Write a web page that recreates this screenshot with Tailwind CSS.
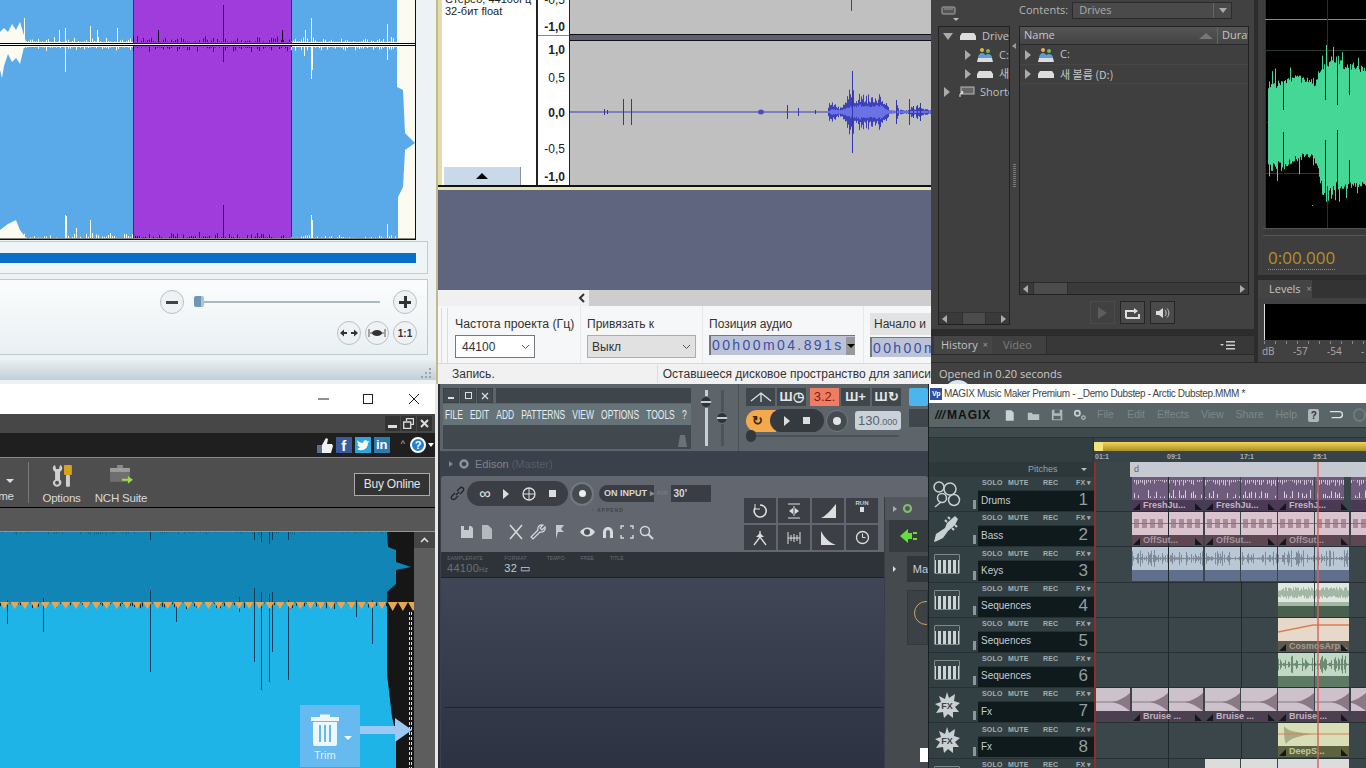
<!DOCTYPE html>
<html lang="en">
<head>
  <meta charset="UTF-8" />
  <title>Audio editors</title>
  <script src="https://cdn.jsdelivr.net/npm/@tailwindcss/browser@4"></script>
</head>
<body class="bg-black">
<div class="w-[1366px] h-[768px] overflow-hidden flex flex-col font-['Liberation_Sans',sans-serif]">

  <!-- top row -->
  <div class="flex h-[384px]">

    <!-- waveform editor, light -->
    <section class="w-[438px] h-full shrink-0 bg-[#edf2f5] border-r-2 border-[#c4b88e] flex flex-col overflow-hidden">
      <svg id="w1" width="416" height="240" class="block shrink-0"></svg>
      <div class="w-[428px] h-[33px] mt-[1px] border border-l-0 border-[#c3cacd] bg-[#eff4f6] flex items-center">
        <div class="w-[416px] h-[10px] bg-[#0a6fc7]"></div>
      </div>
      <div class="w-[428px] h-[76px] mt-[5px] border border-l-0 border-[#c3cacd] bg-gradient-to-b from-[#fbfdfd] to-[#e9f0f3] pr-[10px] pt-[10px] flex flex-col items-end gap-[7px]">
        <div class="flex items-center">
          <div class="w-[24px] h-[24px] rounded-full border border-[#b9c0c4] bg-[#eef2f4] flex items-center justify-center"><div class="w-[12px] h-[3px] bg-[#444]"></div></div>
          <div class="w-[186px] h-[2px] bg-[#a9b9bf] ml-[10px] mr-[13px] relative"><div class="absolute left-0 top-[-5px] w-[10px] h-[11px] rounded-[2px] bg-[#6f97b5] border-r-3 border-[#a8c3d6]"></div></div>
          <div class="w-[24px] h-[24px] rounded-full border border-[#b9c0c4] bg-[#eef2f4] flex items-center justify-center relative"><div class="w-[12px] h-[3px] bg-[#333]"></div><div class="absolute w-[3px] h-[12px] bg-[#333]"></div></div>
        </div>
        <div class="flex gap-[4px]">
          <div class="w-[24px] h-[24px] rounded-full border border-[#b9c0c4] bg-[#eef2f4] flex items-center justify-center">
            <svg width="18" height="8" viewBox="0 0 18 8"><path d="M0 4l4-3.500v2.500h3v2H4v2.500zM18 4l-4-3.500v2.500h-3v2h3v2.500z" fill="#333"/></svg>
          </div>
          <div class="w-[24px] h-[24px] rounded-full border border-[#b9c0c4] bg-[#eef2f4] flex items-center justify-center">
            <svg width="18" height="10" viewBox="0 0 18 10"><path d="M1 1v8M17 1v8M2 5h14" stroke="#555" fill="none"/><ellipse cx="9" cy="5" rx="5" ry="3" fill="#333"/></svg>
          </div>
          <div class="w-[24px] h-[24px] rounded-full border border-[#b9c0c4] bg-[#eef2f4] flex items-center justify-center text-[10px] font-bold text-[#333]">1:1</div>
        </div>
      </div>
      <div class="w-[436px] h-[20px] mt-[5px] bg-gradient-to-b from-[#e9eff2] to-[#c2ced5] flex justify-end items-end pr-[4px] pb-[1px]">
        <svg width="12" height="12" viewBox="0 0 12 12" fill="#9aa5ab"><rect x="9" y="1" width="2" height="2"/><rect x="5" y="5" width="2" height="2"/><rect x="9" y="5" width="2" height="2"/><rect x="1" y="9" width="2" height="2"/><rect x="5" y="9" width="2" height="2"/><rect x="9" y="9" width="2" height="2"/></svg>
      </div>
    </section>

    <!-- audacity -->
    <section class="w-[493px] h-full shrink-0 bg-[#5f647f] flex flex-col overflow-hidden">
      <div class="h-[185px] flex bg-white">
        <div class="w-[4px] bg-[#e3ddad]"></div>
        <div class="w-[97px] border-r-2 border-[#222] flex flex-col text-[11px] leading-[12px] text-[#222] pl-[3px]">
          <div class="-mt-[7px] h-[12px] whitespace-nowrap">Стерео, 44100Гц</div>
          <div>32-бит float</div>
          <div class="mt-auto w-[77px] h-[18px] -ml-[1px] bg-[#c9d9ea] border-r border-[#8d96a0] flex items-center justify-center">
            <div class="w-0 h-0 border-l-[6px] border-r-[6px] border-b-[6px] border-l-transparent border-r-transparent border-b-black"></div>
          </div>
        </div>
        <div class="w-[31px] text-[12px] text-[#222] text-right pr-[4px] flex flex-col">
          <div class="h-[36px] border-b border-[#888] -mr-[4px] pr-[4px] shrink-0">
            <div class="h-[14px] leading-[14px] -mt-[7px]">-0,5</div>
            <div class="h-[14px] leading-[14px] mt-[13px] font-bold">-1,0</div>
          </div>
          <div class="h-[14px] leading-[14px] mt-[7px] font-bold">1,0</div>
          <div class="h-[14px] leading-[14px] mt-[14px]">0,5</div>
          <div class="h-[14px] leading-[14px] mt-[21px] font-bold">0,0</div>
          <div class="h-[14px] leading-[14px] mt-[22px]">-0,5</div>
          <div class="h-[14px] leading-[14px] mt-[14px] font-bold">-1,0</div>
        </div>
        <div class="flex-1 flex flex-col border-l border-[#222]">
          <div class="h-[35px] bg-[#c0c0c0] border-b border-[#111] flex">
            <div class="ml-[281px] w-[1px] h-[11px] bg-[#3d40a8]"></div>
          </div>
          <div class="h-[6px] bg-[#5f6076] border-b border-[#111]"></div>
          <svg id="w2" width="361" height="144" class="block bg-[#c0c0c0]"></svg>
        </div>
      </div>
      <div class="h-[2px] bg-[#111]"></div>
      <div class="h-[3px] bg-[#e6e3b0]"></div>
      <div class="h-[100px] bg-[#5f647f]"></div>
      <div class="h-[16px] flex bg-[#cdcdcd]">
        <div class="w-[151px] bg-[#f0f0f0] flex items-center justify-end pr-[3px]"><svg width="8" height="10" viewBox="0 0 8 10"><path d="M6 1L2 5l4 4" stroke="#333" stroke-width="2" fill="none"/></svg></div>
      </div>
      <div class="h-[58px] bg-[#f6f7f8] border-b border-[#d8d8d8] text-[12px] text-[#333] flex pl-[3px]">
        <div class="w-[7px] border-l border-r border-[#dcdcdc] mr-[6px] mt-[2px]"></div>
        <div class="w-[127px] pt-[10px] pl-[1px] border-r border-[#e8e8e8]">
          <div class="leading-[16px] whitespace-nowrap text-[12.300px]">Частота проекта (Гц)</div>
          <div class="mt-[3px] w-[80px] h-[23px] bg-white border border-[#777] flex items-center justify-between pl-[6px] pr-[4px]"><span>44100</span><svg width="9" height="6" viewBox="0 0 9 6"><path d="M1 1l3.500 3.500L8 1" stroke="#555" fill="none"/></svg></div>
        </div>
        <div class="w-[122px] pt-[10px] pl-[6px] border-r border-[#e8e8e8]">
          <div class="leading-[16px]">Привязать к</div>
          <div class="mt-[3px] w-[109px] h-[23px] bg-[#e1e1e1] border border-[#adadad] flex items-center justify-between pl-[4px] pr-[4px]"><span>Выкл</span><svg width="9" height="6" viewBox="0 0 9 6"><path d="M1 1l3.500 3.500L8 1" stroke="#555" fill="none"/></svg></div>
        </div>
        <div class="w-[161px] pt-[10px] pl-[6px] border-r border-[#e8e8e8]">
          <div class="leading-[16px]">Позиция аудио</div>
          <div class="mt-[3px] w-[146px] h-[20px] bg-[#bcc3d6] border-l-2 border-t border-[#777] flex items-center justify-between pl-[1px] text-[14px] tracking-[2.400px] text-[#3a4fa5] whitespace-nowrap overflow-hidden"><span>00h00m04.891s</span><div class="w-[9px] h-[18px] bg-[#999] flex items-center justify-center shrink-0"><div class="w-0 h-0 border-l-[4px] border-r-[4px] border-t-[4px] border-l-transparent border-r-transparent border-t-black"></div></div></div>
        </div>
        <div class="pl-[6px] pt-[7px] flex-1 overflow-hidden">
          <div class="w-[80px] h-[22px] bg-[#e3e3e3] leading-[22px] pl-[4px] whitespace-nowrap">Начало и</div>
          <div class="mt-[2px] w-[100px] h-[20px] bg-[#bcc3d6] border-l-2 border-t border-[#777] pl-[1px] text-[14px] tracking-[2.400px] text-[#3a4fa5] whitespace-nowrap">00h00m</div>
        </div>
      </div>
      <div class="flex-1 bg-[#f1f1f1] text-[12px] text-[#333] flex items-center pl-[14px]">
        <div class="w-[213px]">Запись.</div><div class="whitespace-nowrap border-l border-[#ddd] pl-[5px]">Оставшееся дисковое пространство для записи</div>
      </div>
    </section>

    <!-- audition -->
    <section class="flex-1 min-w-0 h-full bg-[#2c2c2c] flex flex-col font-['Open_Sans',sans-serif] text-[#bdbdbd] overflow-hidden">
      <div class="h-[362px] flex">
        <div class="w-[323px] shrink-0 flex flex-col">
          <div class="h-[329px] bg-[#414141] flex flex-col">
            <div class="h-[26px] flex items-start pt-[2px] relative">
              <svg class="ml-[10px] mt-[2px]" width="18" height="18" viewBox="0 0 18 18"><rect x="1" y="3" width="13" height="7" rx="1" fill="#555" stroke="#aaa"/><path d="M3 5h9" stroke="#999"/><path d="M12 14h6l-3 3z" fill="#bbb"/></svg>
              <span class="ml-[60px] text-[11px] text-[#b5b5b5] leading-[16px]">Contents:</span>
              <div class="ml-[4px] w-[160px] h-[17px] bg-[#4a4a4a] border border-[#2b2b2b] flex justify-between items-center pl-[6px] text-[11px] text-[#aaa]"><span>Drives</span><div class="w-[18px] h-full border-l border-[#666] flex items-center justify-center"><div class="w-0 h-0 border-l-[4px] border-r-[4px] border-t-[5px] border-l-transparent border-r-transparent border-t-[#aaa]"></div></div></div>
            </div>
            <div class="flex flex-1 pl-[7px]">
              <!-- tree -->
              <div class="w-[72px] h-[299px] border border-[#222] bg-[#3f3f3f] flex flex-col text-[11px] text-[#c0c0c0]">
                <div class="flex-1 overflow-hidden whitespace-nowrap">
                  <div class="h-[18.700px] flex items-center pl-[4px]"><div class="shrink-0 w-0 h-0 border-l-[5px] border-r-[5px] border-t-[7px] border-l-transparent border-r-transparent border-t-[#aaa]"></div><svg class="shrink-0 ml-[7px] mr-[6px]" width="16" height="10" viewBox="0 0 16 10"><path d="M2 2h12l2 3v4H0V5z" fill="#ddd"/></svg><span>Drives</span></div>
                  <div class="h-[18.700px] flex items-center pl-[26px]"><div class="shrink-0 w-0 h-0 border-t-[5px] border-b-[5px] border-l-[6px] border-t-transparent border-b-transparent border-l-[#aaa]"></div><svg class="shrink-0 ml-[6px] mr-[6px]" width="16" height="16" viewBox="0 0 16 16"><circle cx="5" cy="3" r="2" fill="#e0b84a"/><circle cx="11" cy="4" r="2" fill="#7bb85a"/><path d="M1 11c0-3 2-5 4-5s4 2 4 5zM7 11c0-3 2-4 4-4s4 1 4 4z" fill="#5f9ccf"/><path d="M1 11h14l1 4H0z" fill="#dcdcdc"/></svg><span>C:</span></div>
                  <div class="h-[18.700px] flex items-center pl-[26px]"><div class="shrink-0 w-0 h-0 border-t-[5px] border-b-[5px] border-l-[6px] border-t-transparent border-b-transparent border-l-[#aaa]"></div><svg class="shrink-0 ml-[6px] mr-[6px]" width="16" height="10" viewBox="0 0 16 10"><path d="M2 2h12l2 3v4H0V5z" fill="#ddd"/></svg><span class="font-['Noto_Sans_CJK_KR',sans-serif]">새 볼륨</span></div>
                  <div class="h-[18.700px] flex items-center pl-[5px]"><div class="shrink-0 w-0 h-0 border-t-[5px] border-b-[5px] border-l-[6px] border-t-transparent border-b-transparent border-l-[#aaa]"></div><svg class="shrink-0 ml-[9px] mr-[5px]" width="16" height="12" viewBox="0 0 16 12"><rect x="2" y="1" width="13" height="7" fill="#666" stroke="#bbb"/><path d="M1 11V8l3-2M2 5l2 1-1 2" stroke="#eee" fill="none"/></svg><span>Shortcuts</span></div>
                </div>
                <div class="h-[12px] flex items-center justify-between bg-[#3a3a3a] border-t border-[#333] px-[3px]"><div class="w-0 h-0 border-t-[4px] border-b-[4px] border-r-[5px] border-t-transparent border-b-transparent border-r-[#aaa]"></div><div class="w-[24px] h-full bg-[#4c4c4c] border-x border-[#2e2e2e]"></div><div class="w-0 h-0 border-t-[4px] border-b-[4px] border-l-[5px] border-t-transparent border-b-transparent border-l-[#aaa]"></div></div>
              </div>
              <!-- splitter -->
              <div class="w-[9px] relative"><div class="absolute left-[3px] top-[138px] w-[3px] h-[23px] bg-[repeating-linear-gradient(#7a7a7a_0_1px,transparent_1px_2px)]"></div><div class="absolute left-[2px] top-[17px] w-0 h-0 border-t-[3px] border-b-[3px] border-r-[4px] border-t-transparent border-b-transparent border-r-[#999]"></div></div>
              <!-- list -->
              <div class="w-[230px] flex flex-col">
                <div class="h-[269px] border border-[#222] bg-[#3f3f3f] flex flex-col">
                  <div class="h-[18px] bg-gradient-to-b from-[#555] to-[#444] border-b border-[#2a2a2a] flex items-center text-[11px] pl-[4px] text-[#c5c5c5]"><span>Name</span><div class="ml-auto mr-[4px] w-0 h-0 border-l-[7px] border-r-[7px] border-b-[6px] border-l-transparent border-r-transparent border-b-[#777]"></div><div class="w-[31px] border-l border-[#666] pl-[4px] overflow-hidden">Duration</div></div>
                  <div class="h-[20px] flex items-center border-b border-[#464646] pl-[5px] text-[11px] text-[#c5c5c5]"><div class="w-0 h-0 border-t-[5px] border-b-[5px] border-l-[6px] border-t-transparent border-b-transparent border-l-[#aaa]"></div><svg class="ml-[7px]" width="16" height="16" viewBox="0 0 16 16"><circle cx="5" cy="3" r="2" fill="#e0b84a"/><circle cx="11" cy="4" r="2" fill="#7bb85a"/><path d="M1 11c0-3 2-5 4-5s4 2 4 5zM7 11c0-3 2-4 4-4s4 1 4 4z" fill="#5f9ccf"/><path d="M1 11h14l1 4H0z" fill="#dcdcdc"/></svg><span class="ml-[6px]">C:</span></div>
                  <div class="h-[19px] flex items-center border-b border-[#464646] pl-[5px] text-[11px] text-[#c5c5c5]"><div class="w-0 h-0 border-t-[5px] border-b-[5px] border-l-[6px] border-t-transparent border-b-transparent border-l-[#aaa]"></div><svg class="ml-[7px]" width="16" height="10" viewBox="0 0 16 10"><path d="M2 2h12l2 3v4H0V5z" fill="#ddd"/></svg><span class="ml-[6px] font-['Noto_Sans_CJK_KR',sans-serif]">새 볼륨 (D:)</span></div>
                  <div class="mt-auto h-[12px] flex items-center justify-between bg-[#3a3a3a] border-t border-[#2a2a2a] px-[3px]"><div class="w-0 h-0 border-t-[4px] border-b-[4px] border-r-[5px] border-t-transparent border-b-transparent border-r-[#aaa]"></div><div class="w-[35px] h-full bg-[#4c4c4c] border-x border-[#2e2e2e] mr-auto ml-[5px]"></div><div class="w-0 h-0 border-t-[4px] border-b-[4px] border-l-[5px] border-t-transparent border-b-transparent border-l-[#aaa]"></div></div>
                </div>
                <div class="flex justify-center gap-[5px] mt-[6px] pr-[3px]">
                  <div class="w-[25px] h-[23px] border border-[#4b4b4b] flex items-center justify-center"><div class="w-0 h-0 border-t-[6px] border-b-[6px] border-l-[9px] border-t-transparent border-b-transparent border-l-[#5d5d5d]"></div></div>
                  <div class="w-[25px] h-[23px] border border-[#252525] bg-[#4a4a4a] flex items-center justify-center"><svg width="15" height="12" viewBox="0 0 15 12"><path d="M1 11V4h8M1 11h13V7" stroke="#ddd" stroke-width="2" fill="none"/><path d="M9 1l4 3-4 3z" fill="#ddd"/></svg></div>
                  <div class="w-[25px] h-[23px] border border-[#252525] bg-[#4a4a4a] flex items-center justify-center"><svg width="17" height="12" viewBox="0 0 17 12"><path d="M2 4h3l4-3v10L5 8H2z" fill="#ddd"/><path d="M11 3c1.500 1.500 1.500 4.500 0 6M13 1.500c2.500 2.500 2.500 6.500 0 9" stroke="#ccc" fill="none"/></svg></div>
                </div>
              </div>
            </div>
          </div>
          <div class="h-[6px]"></div>
          <div class="h-[20px] bg-[#383838] flex items-stretch pl-[3px] text-[11px] border-y border-[#2a2a2a]">
            <div class="w-[58px] bg-[#454545] flex items-center pl-[7px] gap-[5px] text-[#c2c2c2]">History <span class="text-[9px] text-[#999]">×</span></div>
            <div class="w-[55px] bg-[#404040] border-r border-[#2a2a2a] flex items-center pl-[11px] text-[#7e7e7e]">Video</div>
            <svg class="ml-auto mr-[18px] self-center" width="16" height="9" viewBox="0 0 16 9" fill="#ccc"><rect x="6" y="0" width="9" height="1.500"/><rect x="6" y="3.500" width="9" height="1.500"/><rect x="6" y="7" width="9" height="1.500"/><path d="M0 3h4L2 5z"/></svg>
          </div>
          <div class="h-[7px] bg-[#414141]"></div>
        </div>
        <div class="w-[4px] shrink-0"></div>
        <div class="flex-1 min-w-0 flex flex-col">
          <div class="h-[275px] bg-[#3e3e3e] pl-[7px] flex flex-col">
            <svg id="w3" width="108" height="228" class="block shrink-0 bg-black"></svg>
            <div class="h-[8px] border-y border-[#555] bg-[#3a3a3a] -ml-[2px]"></div>
            <div class="pl-[3px] pt-[9px] text-[17px] leading-[26px] text-[#b5902c]"><span class="border-b border-dotted border-[#b5902c]">0:00.000</span></div>
          </div>
          <div class="h-[5px]"></div>
          <div class="h-[18px] bg-[#333] flex"><div class="w-[54px] bg-[#444] text-[11px] text-[#c5c5c5] flex items-center pl-[11px] gap-[6px]">Levels <span class="text-[9px] text-[#999]">×</span></div></div>
          <div class="flex-1 bg-[#414141] pl-[6px] pt-[6px]">
            <div class="h-[36px] bg-black"><div class="w-[1px] h-full bg-[#ddd]"></div></div>
            <div class="h-[3px] mt-[1px] bg-[repeating-linear-gradient(90deg,#888_0_1px,transparent_1px_11px)]"></div>
            <div class="text-[10px] text-[#aaa] flex leading-[14px] -ml-[2px]"><span class="w-[31px]">dB</span><span class="w-[34px]">-57</span><span class="w-[34px]">-54</span><span>-</span></div>
          </div>
        </div>
      </div>
      <div class="flex-1 bg-[#414141] border-t border-[#2a2a2a] text-[11px] text-[#c9c9c9] pl-[8px] leading-[21px] relative overflow-hidden">Opened in 0.20 seconds<div class="absolute left-[13px] top-[17px] w-[28px] h-[28px] rounded-full bg-[#d8e6f2]"></div></div>
    </section>
  </div>

  <!-- bottom row -->
  <div class="flex h-[384px]">

    <!-- wavepad style editor -->
    <section class="w-[438px] shrink-0 bg-[#e8e8e8] flex flex-col pr-[3px] overflow-hidden">
      <div class="h-[30px] bg-white flex items-center text-[#222]">
        <svg class="ml-[317px]" width="12" height="12" viewBox="0 0 12 12"><path d="M1 6h11" stroke="#222"/></svg>
        <svg class="ml-[33px]" width="12" height="12" viewBox="0 0 12 12"><rect x="1.500" y="1.500" width="9" height="9" fill="none" stroke="#222"/></svg>
        <svg class="ml-[34px]" width="12" height="12" viewBox="0 0 12 12"><path d="M1 1l10 10M11 1L1 11" stroke="#222"/></svg>
      </div>
      <div class="h-[19px] bg-[#474747] flex items-center justify-end gap-[1px] pr-[3px]">
        <div class="w-[15px] h-[15px] bg-[#333] flex items-end justify-center pb-[3px]"><div class="w-[9px] h-[3px] bg-[#ddd]"></div></div>
        <div class="w-[15px] h-[15px] bg-[#333] flex items-center justify-center"><svg width="11" height="11" viewBox="0 0 11 11"><path d="M3.500 3V.7h7v5.600H8M.7 4h7v6.300h-7z" stroke="#ddd" fill="none" stroke-width="1.300"/></svg></div>
        <div class="w-[15px] h-[15px] bg-[#333] flex items-center justify-center"><svg width="9" height="9" viewBox="0 0 9 9"><path d="M1 1l7 7M8 1L1 8" stroke="#ddd" stroke-width="2"/></svg></div>
      </div>
      <div class="h-[25px] bg-[#1f1f1f] border-b border-[#8a8a8a] flex items-center justify-end text-white">
        <svg width="16" height="16" viewBox="0 0 16 16" class="mr-[1px]"><rect x="0" y="8" width="5" height="8" fill="#5a6d94"/><path d="M5 8l4-7 2 1-1 5h5l1 2-2 7H5z" fill="#f0f0f0"/></svg>
        <div class="w-[16px] h-[16px] bg-[#3b5a9a] text-[15px] font-bold leading-[18px] text-center ml-[2px] overflow-hidden">f</div>
        <div class="w-[16px] h-[16px] bg-[#2ea6dd] ml-[3px] flex items-center justify-center"><svg width="14" height="12" viewBox="0 0 14 12"><path d="M1 10c5 3 11 0 11-6l1.500-2-2 .6C10.500.5 7 1 7.200 4 5 4 3 3 1.500 1.300 1 3 1.500 4.500 3 5.500l-1.500-.3C1.700 7 3 7.700 4 8 3.200 9 2 9.800 1 10z" fill="#fff"/></svg></div>
        <div class="w-[16px] h-[16px] bg-[#2b7bb0] text-[13px] font-bold leading-[16px] text-center ml-[3px]">in</div>
        <span class="ml-[11px] text-[9px] text-[#bbb]">^</span>
        <div class="ml-[5px] w-[16px] h-[16px] rounded-full bg-[#1f7fd0] border-2 border-white text-[11px] font-bold leading-[12px] text-center">?</div>
        <div class="ml-[2px] mr-[1px] w-0 h-0 border-l-[3px] border-r-[3px] border-t-[4px] border-l-transparent border-r-transparent border-t-white"></div>
      </div>
      <div class="h-[50px] bg-[#4e4e4e] border-b border-black flex items-stretch text-[#d9d9d9] text-[11.500px] tracking-[-0.200px]">
        <div class="w-[29px] border-r border-[#777] my-[4px] flex flex-col items-start overflow-hidden"><div class="ml-[6px] mt-[17px] w-0 h-0 border-l-[4px] border-r-[4px] border-t-[4px] border-l-transparent border-r-transparent border-t-[#ddd]"></div><span class="mt-[5px] -ml-[8px]">ome</span></div>
        <div class="ml-[14px] w-[37px] flex flex-col items-center pt-[6px]">
          <svg width="24" height="24" viewBox="0 0 24 24"><path d="M5 1l1 4h3l1-4c3 1 3 5 0 7v8c3 2 1 7-3 7s-6-5-2-7V8C2 6 2 2 5 1z" fill="#cfcfcf"/><circle cx="7" cy="19" r="2" fill="#4e4e4e"/><rect x="14" y="1" width="8" height="10" rx="1" fill="#d9a21e"/><rect x="16" y="11" width="4" height="12" rx="1" fill="#cfcfcf"/></svg>
          <span class="mt-[2px]">Options</span>
        </div>
        <div class="ml-[17px] w-[48px] flex flex-col items-center pt-[6px] whitespace-nowrap">
          <svg width="26" height="24" viewBox="0 0 26 24"><path d="M2 4h20v14H2z" fill="#6f6f6f"/><rect x="2" y="4" width="20" height="4" fill="#9c9c9c"/><rect x="9" y="1" width="6" height="3" fill="#8a8a8a"/><path d="M14 15h6v-3l5 4-5 4v-3h-6z" fill="#9ddb4c"/></svg>
          <span class="mt-[2px]">NCH Suite</span>
        </div>
        <div class="ml-auto mr-[5px] mt-[15px] w-[76px] h-[23px] bg-[#333] border border-[#aaa] text-center leading-[21px] text-[12px] text-[#e4e4e4]">Buy Online</div>
      </div>
      <div class="h-[24px] bg-[#575757] border-b border-[#7d9cab]"></div>
      <div class="flex-1 flex relative">
        <svg id="w4" width="414" height="236" class="block bg-[#1eb4e8] shrink-0"></svg>
        <div class="flex-1 bg-[#5d5d5d] flex flex-col"><div class="h-[16px] bg-[#454545] flex items-center justify-center"><svg width="9" height="6" viewBox="0 0 9 6"><path d="M1 5l3.500-3.500L8 5" stroke="#ddd" stroke-width="1.600" fill="none"/></svg></div></div>
        <!-- trim overlay -->
        <div class="absolute left-[300px] top-[173px] w-[60px] h-[62px] bg-[#66baf0] flex flex-col items-start pl-[10px] text-[#e2f1fb]">
          <div class="flex items-end mt-[8px]">
            <svg width="30" height="33" viewBox="0 0 30 33"><path d="M10 4V1.500h10V4h9v4H1V4z" fill="#eef7fc"/><path d="M3 9h24v22a2 2 0 0 1-2 2H5a2 2 0 0 1-2-2z" fill="#eef7fc"/><path d="M10 12v17M15 12v17M20 12v17" stroke="#66baf0" stroke-width="2"/></svg>
            <div class="ml-[4px] mb-[6px] w-0 h-0 border-l-[4px] border-r-[4px] border-t-[4px] border-l-transparent border-r-transparent border-t-[#eef7fc]"></div>
          </div>
          <span class="mt-[3px] ml-[4px] text-[11px] leading-[13px]">Trim</span>
        </div>
        <svg class="absolute left-[360px] top-[185px]" width="53" height="26" viewBox="0 0 53 26"><path d="M0 9h35V1l17 12-17 12v-8H0z" fill="#9cc8f3"/></svg>
      </div>
    </section>

    <!-- fl studio -->
    <section class="w-[490px] shrink-0 bg-[#3a414a] flex flex-col relative overflow-hidden text-[#d8dee2] border-l-2 border-[#2c3034]">
      <div class="h-[68px] bg-[#5d656b] flex border-b border-[#3d4349]">
        <div class="w-[251px] pt-[4px] pl-[3px] flex flex-col">
          <div class="flex gap-[1px] h-[15px]">
            <div class="w-[16px] bg-[#434a50] border border-[#394046] flex items-end justify-center pb-[3px]"><div class="w-[6px] h-[2px] bg-[#ddd]"></div></div>
            <div class="w-[16px] bg-[#434a50] border border-[#394046] flex items-center justify-center"><div class="w-[7px] h-[7px] border border-[#ddd]"></div></div>
            <div class="w-[16px] bg-[#434a50] border border-[#394046] flex items-center justify-center"><svg width="8" height="8" viewBox="0 0 8 8"><path d="M1 1l6 6M7 1L1 7" stroke="#ddd" stroke-width="1.300"/></svg></div>
            <div class="ml-[2px] flex-1 bg-[#3f464b]"></div>
          </div>
          <div class="h-[21px] bg-[#66747a] mt-[1px] flex items-center overflow-hidden"><div class="flex items-center w-[400px] shrink-0 origin-left scale-x-[0.65] text-[13px] gap-[11px] pl-[3px] whitespace-nowrap text-[#e6edef]"><span>FILE</span><span>EDIT</span><span>ADD</span><span>PATTERNS</span><span>VIEW</span><span>OPTIONS</span><span>TOOLS</span><span>?</span></div></div>
          <div class="h-[24px] bg-[#42494e] flex justify-end items-end pr-[3px] pb-[1px]"><svg width="11" height="14" viewBox="0 0 11 14"><path d="M3 1h5l2 12H1z" fill="#6a7278"/></svg></div>
        </div>
        <div class="w-[48px] border-r border-[#474e54] flex justify-center gap-[10px] pr-[1px]">
          <div class="w-[6px] h-[56px] mt-[6px] relative flex justify-center"><div class="w-[3px] h-full bg-[#c9cfd2]"></div><div class="absolute top-[6px] w-[12px] h-[12px] rounded-full bg-[#2f3439] border border-[#6a7278] flex items-center"><div class="w-full h-[2px] bg-[#ccc]"></div></div></div>
          <div class="w-[6px] h-[56px] mt-[6px] relative flex justify-center"><div class="w-[3px] h-full bg-[#4c5359]"></div><div class="absolute top-[22px] w-[12px] h-[12px] rounded-full bg-[#2f3439] border border-[#6a7278] flex items-center"><div class="w-full h-[2px] bg-[#ccc]"></div></div></div>
        </div>
        <div class="flex-1 pl-[7px] pt-[4px] relative">
          <div class="flex gap-[2px] h-[18px] text-[13px] font-bold">
            <div class="w-[29px] bg-[#3f464c] flex items-center justify-center"><svg width="22" height="12" viewBox="0 0 22 12"><path d="M1 10l10-8 10 8M11 2v9" stroke="#e0e0e0" fill="none" stroke-width="1.300"/></svg></div>
            <div class="w-[29px] bg-[#3f464c] text-center leading-[18px] text-[#e6e6e6]">Ш◷</div>
            <div class="w-[29px] ml-[2px] bg-[#ee7d64] text-center leading-[18px] text-[#7a1d10] font-normal">3.2.</div>
            <div class="w-[29px] bg-[#3f464c] text-center leading-[18px] text-[#e6e6e6]">Ш+</div>
            <div class="w-[29px] bg-[#3f464c] text-center leading-[18px] text-[#e6e6e6]">Ш↻</div>
          </div>
          <div class="flex items-center mt-[3px] h-[23px]">
            <div class="w-[30px] h-[22px] rounded-l-full bg-[#f4a94c] flex items-center pl-[6px] text-[#3b2a10] font-bold text-[13px]">↻</div>
            <div class="-ml-[6px] w-[54px] h-[23px] rounded-full bg-[#353a40] flex items-center justify-around px-[8px]"><div class="w-0 h-0 border-t-[5px] border-b-[5px] border-l-[6px] border-t-transparent border-b-transparent border-l-[#ddd]"></div><div class="w-[7px] h-[7px] bg-[#ddd]"></div></div>
            <div class="ml-[2px] w-[22px] h-[22px] rounded-full bg-[#454b51] border border-[#72797f] flex items-center justify-center"><div class="w-[8px] h-[8px] rounded-full bg-[#e4e4e4]"></div></div>
            <div class="ml-[7px] w-[46px] h-[19px] rounded-[3px] bg-[#c8d2d8] text-[#59626a] text-[13px] leading-[19px] pl-[3px] whitespace-nowrap overflow-hidden">130<span class="text-[9px]">.000</span></div>
          </div>
          <div class="mt-[3px] h-[2px] ml-[3px] w-[150px] bg-[#4a5157] relative"><div class="absolute -top-[5px] -left-[3px] w-[10px] h-[12px] rounded-full bg-[#33383d]"></div></div>
          <div class="absolute left-[170px] top-[4px] w-[19px] h-[18px] rounded-[2px] bg-[#4bb6ee]"></div>
          <div class="absolute left-[170px] top-[25px] w-[19px] h-[18px] bg-[#3f464c]"></div>
        </div>
      </div>
      <div class="h-[24px] flex items-center pl-[6px] gap-[5px] text-[11px] text-[#7d858d] shrink-0">
        <div class="w-0 h-0 border-t-[3px] border-b-[3px] border-l-[4px] border-t-transparent border-b-transparent border-l-[#7d858d] ml-[3px]"></div>
        <svg width="12" height="12" viewBox="0 0 12 12"><circle cx="6" cy="6" r="3.500" fill="none" stroke="#8a929a" stroke-width="2.500"/></svg>
        <span>Edison <span class="text-[#565e66]">(Master)</span></span>
      </div>
      <div class="h-[76px] shrink-0 bg-[#62676f] rounded-t-[3px] ml-[1px] flex flex-col relative">
        <div class="flex items-center pt-[5px] pl-[9px]">
          <svg width="15" height="15" viewBox="0 0 15 15"><path d="M6 9l3-3M5 7L2 10a2 2 0 0 0 3 3l3-3M10 8l3-3a2 2 0 0 0-3-3L7 5" stroke="#22262b" fill="none" stroke-width="1.300"/></svg>
          <div class="ml-[2px] w-[101px] h-[25px] rounded-full bg-[#3b3f45] flex items-center justify-around text-[#e6e6e6] px-[6px]"><span class="text-[16px] leading-[16px]">∞</span><div class="w-0 h-0 border-t-[5px] border-b-[5px] border-l-[6px] border-t-transparent border-b-transparent border-l-[#ddd]"></div><svg width="14" height="14" viewBox="0 0 14 14"><circle cx="7" cy="7" r="6" fill="none" stroke="#ddd" stroke-width="1.300"/><path d="M1 7h12M7 1v12" stroke="#ddd"/></svg><div class="w-[7px] h-[7px] bg-[#ddd]"></div></div>
          <div class="ml-[2px] w-[24px] h-[24px] rounded-full bg-[#454b51] border-2 border-[#72797f] flex items-center justify-center"><div class="w-[7px] h-[7px] rounded-full bg-[#eee]"></div></div>
          <div class="ml-[5px] w-[55px] h-[17px] rounded-l-full bg-[#3a3e44] text-[9px] font-bold leading-[17px] pl-[5px] text-[#d6d6d6] whitespace-nowrap overflow-hidden">ON INPUT <span class="text-[#8d8d8d]">▸</span></div>
          <span class="mx-[3px] text-[5px] text-[#7f858c]">FOR</span>
          <div class="w-[40px] h-[17px] bg-[#3a3e44] text-[10px] font-bold leading-[17px] pl-[3px] text-[#d6d6d6]">30'</div>
        </div>
        <div class="ml-[151px] mt-[1px] text-[5px] font-bold tracking-[1px] text-[#3f444a] leading-[6px]">▫ APPEND</div>
        <div class="flex items-center pl-[19px] mt-[11px] gap-[5px]">
          <svg width="14" height="14" viewBox="0 0 14 14"><path d="M1 1h10l2 2v10H1z" fill="#c5c9cd"/><rect x="4" y="1" width="5" height="4" fill="#62676f"/></svg>
          <svg class="ml-[1px]" width="14" height="14" viewBox="0 0 14 14"><path d="M2 0h6l4 4v10H2z" fill="#b5b9be"/></svg>
          <svg class="ml-[9px]" width="16" height="16" viewBox="0 0 16 16"><path d="M2 1l12 14M14 1L2 15" stroke="#d5d9dc" stroke-width="1.600"/></svg>
          <svg class="ml-[1px]" width="16" height="16" viewBox="0 0 16 16"><path d="M15 3l-3 3-2-2 3-3a4 4 0 0 0-5 5L1 13l2 2 7-7a4 4 0 0 0 5-5z" fill="none" stroke="#d5d9dc" stroke-width="1.200"/></svg>
          <svg class="ml-[1px]" width="14" height="16" viewBox="0 0 14 16"><path d="M4 1h8L9 5l3 3H6l-2 7z" fill="#c5c9cd"/></svg>
          <svg class="ml-[8px]" width="17" height="12" viewBox="0 0 17 12"><path d="M1 6c4-6 11-6 15 0-4 6-11 6-15 0z" fill="#d9dcdf"/><circle cx="8" cy="6" r="3" fill="#4a5058"/></svg>
          <svg width="14" height="14" viewBox="0 0 14 14"><path d="M2 13V7a5 5 0 0 1 10 0v6H9V7a2 2 0 0 0-4 0v6z" fill="#d9dcdf"/></svg>
          <svg width="14" height="14" viewBox="0 0 14 14"><path d="M1 4V1h3M10 1h3v3M13 10v3h-3M4 13H1v-3" fill="none" stroke="#d5d9dc" stroke-width="1.400"/></svg>
          <svg width="15" height="15" viewBox="0 0 15 15"><circle cx="6" cy="6" r="4.500" fill="none" stroke="#d5d9dc" stroke-width="1.500"/><path d="M9 9l5 5" stroke="#d5d9dc" stroke-width="2"/></svg>
        </div>
        <!-- edison button grid -->
        <div class="absolute left-[303px] top-[22px] grid grid-cols-4 gap-[2px]">
          <div class="w-[32px] h-[25px] bg-[#3c4046] flex items-center justify-center"><svg width="16" height="16" viewBox="0 0 16 16"><path d="M8 2a6 6 0 1 1-5 3" fill="none" stroke="#ddd" stroke-width="1.600"/><path d="M3 1v5h5" fill="none" stroke="#ddd"/></svg></div>
          <div class="w-[32px] h-[25px] bg-[#3c4046] flex items-center justify-center"><svg width="16" height="16" viewBox="0 0 16 16"><path d="M2 1h12M2 15h12M8 3v10" stroke="#ddd"/><path d="M3 8l4-3v6zM13 8l-4-3v6z" fill="#ddd"/></svg></div>
          <div class="w-[32px] h-[25px] bg-[#3c4046] flex items-center justify-center"><svg width="16" height="14" viewBox="0 0 16 14"><path d="M1 14C6 12 11 6 16 0v14z" fill="#ddd"/></svg></div>
          <div class="w-[32px] h-[25px] bg-[#3c4046] flex flex-col items-center text-[6px] leading-[6px] font-bold text-[#ccc] pt-[2px]">RUN<div class="w-[4px] h-[5px] bg-[#ddd] mt-[1px]"></div></div>
          <div class="w-[32px] h-[25px] bg-[#3c4046] flex items-center justify-center"><svg width="16" height="16" viewBox="0 0 16 16"><path d="M8 1v6M8 7L2 15M8 7l6 8" stroke="#ddd" stroke-width="1.300"/><path d="M4 7l4-4 4 4z" fill="#ddd"/></svg></div>
          <div class="w-[32px] h-[25px] bg-[#3c4046] flex items-center justify-center"><svg width="16" height="16" viewBox="0 0 16 16"><path d="M2 2v12M14 2v12M8 4v8M5 5v6M11 5v6M2 8h12" stroke="#ddd"/></svg></div>
          <div class="w-[32px] h-[25px] bg-[#3c4046] flex items-center justify-center"><svg width="16" height="14" viewBox="0 0 16 14"><path d="M1 0v14h15C9 12 4 6 1 0z" fill="#ddd"/></svg></div>
          <div class="w-[32px] h-[25px] bg-[#3c4046] flex items-center justify-center"><svg width="15" height="15" viewBox="0 0 15 15"><circle cx="7.500" cy="7.500" r="6" fill="none" stroke="#ddd" stroke-width="1.300"/><path d="M7.500 3.500v4h3" fill="none" stroke="#ddd"/></svg></div>
        </div>
      </div>
      <div class="h-[26px] shrink-0 ml-[1px] bg-[#2e3339] border-b border-[#1e2226] flex gap-[16px] pl-[6px] text-[#666d75] overflow-hidden">
        <div class="flex flex-col text-[5px] leading-[7px] pt-[3px] tracking-[0.300px]"><span>SAMPLERATE</span><span class="text-[11px] leading-[11px] mt-[1px] text-[#6a7178]">44100<span class="text-[7px]">Hz</span></span></div>
        <div class="flex flex-col text-[5px] leading-[7px] pt-[3px] tracking-[0.300px]"><span>FORMAT</span><span class="text-[11px] leading-[11px] mt-[1px] text-[#c5cacd]">32 ▭</span></div>
        <div class="text-[5px] leading-[7px] pt-[3px]">TEMPO</div>
        <div class="text-[5px] leading-[7px] pt-[3px]">FREE</div>
        <div class="text-[5px] leading-[7px] pt-[3px]">TITLE</div>
      </div>
      <div class="flex-1 ml-[1px] bg-gradient-to-b from-[#404655] to-[#2c3242] flex flex-col">
        <div class="h-[130px] border-b border-[#1f2530] mx-[3px] shrink-0"></div>
      </div>
      <!-- playlist panel over edison -->
      <div class="absolute left-[444px] top-[113px] bottom-0 right-0 bg-[#454a4f] flex flex-col border-l border-[#383d42]">
        <div class="h-[23px] bg-[#50565b] flex items-center pl-[8px] gap-[5px]"><div class="w-0 h-0 border-t-[3px] border-b-[3px] border-l-[4px] border-t-transparent border-b-transparent border-l-[#aaa]"></div><svg width="11" height="11" viewBox="0 0 11 11"><circle cx="5.500" cy="5.500" r="3.500" fill="none" stroke="#7dc06a" stroke-width="2.200"/></svg></div>
        <div class="h-[32px] bg-[#363b40] ml-[4px] flex items-center pl-[10px]"><svg width="19" height="16" viewBox="0 0 19 16"><path d="M1 8l8-7v4h4v6H9v4z" fill="#63e033"/><path d="M14 5h4M14 11h4" stroke="#63e033" stroke-width="2"/></svg></div>
        <div class="h-[26px] mt-[4px] ml-[4px] flex items-center"><div class="w-[12px] flex justify-center"><div class="w-0 h-0 border-t-[3px] border-b-[3px] border-l-[3px] border-t-transparent border-b-transparent border-l-[#ddd]"></div></div><div class="ml-[6px] flex-1 h-full bg-[#31363b] text-[11px] leading-[26px] pl-[6px] text-[#ccd]">Ma</div></div>
        <div class="ml-[22px] mt-[8px] h-[55px] bg-[#3c4146] border border-[#33383d] pl-[6px] pt-[10px] overflow-hidden"><div class="w-[24px] h-[24px] rounded-full border border-[#c9a75a]"></div></div>
        <div class="mt-auto mb-[6px] ml-[35px] w-[10px] h-[14px] bg-white"></div>
      </div>
    </section>

    <!-- magix -->
    <section class="flex-1 min-w-0 bg-[#36424a] flex flex-col overflow-hidden border-l border-[#1a1f22]">
      <div class="h-[19px] bg-white flex items-center pl-[1px] text-[10px] tracking-[-0.350px] text-[#444] whitespace-nowrap">
        <div class="w-[12px] h-[12px] bg-[#2f4fa0] text-[7px] text-white text-center leading-[12px] font-bold mr-[2px]">Vp</div>
        <span>MAGIX Music Maker Premium - _Demo Dubstep - Arctic Dubstep.MMM *</span>
      </div>
      <div class="h-[25px] bg-[#5a6567] border-b border-[#2f373a] flex items-center text-[10.500px] text-[#7d888a] pl-[6px] whitespace-nowrap">
        <span class="font-bold text-[12px] text-[#111] italic mr-[2px]">///</span><span class="font-bold text-[12px] tracking-[1px] text-[#111] mr-[14px]">MAGIX</span>
        <svg width="11" height="15" viewBox="0 0 12 15"><path d="M1 1h7l3 3v10H1z" fill="#c9d2d4"/></svg>
        <svg class="ml-[12px]" width="15" height="13" viewBox="0 0 16 13"><path d="M1 3h5l1 2h8v7H1z" fill="#b9c3c5"/></svg>
        <svg class="ml-[11px]" width="14" height="14" viewBox="0 0 14 14"><path d="M1 1h12v12H1z" fill="#aeb8ba"/><rect x="4" y="1" width="6" height="4" fill="#5a6567"/><rect x="3" y="8" width="8" height="4" fill="#5a6567"/></svg>
        <svg class="ml-[10px]" width="16" height="14" viewBox="0 0 16 14"><circle cx="5" cy="5" r="3" fill="none" stroke="#c5cfd1" stroke-width="2"/><circle cx="12" cy="10" r="2" fill="none" stroke="#aeb8ba" stroke-width="1.500"/></svg>
        <span class="ml-[10px]">File</span><span class="ml-[13px]">Edit</span><span class="ml-[12px]">Effects</span><span class="ml-[12px]">View</span><span class="ml-[12px]">Share</span><span class="ml-[12px]">Help</span>
        <div class="ml-[11px] w-[13px] h-[13px] bg-[#aeb8ba] rounded-[2px] text-[#333] text-[10px] font-bold text-center leading-[13px]">?</div>
        <svg class="ml-[10px]" width="16" height="14" viewBox="0 0 16 14"><path d="M1 3h11a2.500 2.500 0 0 1 0 7H3" fill="none" stroke="#dfe5e6" stroke-width="1.500"/></svg>
        <div class="ml-[10px] w-[14px] h-[14px] rounded-full border-2 border-[#6f7a7c]"></div>
      </div>
      <div class="h-[10px] bg-[#3f4a4d] border-b border-[#2b3336]"></div>
      <!-- ruler -->
      <div class="h-[24px] bg-[#37424a] flex shrink-0">
        <div class="w-[165px] bg-[#333e41] border-r border-[#2b3336] shrink-0"></div>
        <div class="flex-1 relative">
          <div class="h-[9px] mt-[4px] bg-gradient-to-b from-[#f0d65a] to-[#a88f20] flex"><div class="w-[9px] bg-[#f4e27a] rounded-l-[2px]"></div></div>
          <div class="flex text-[7px] text-[#a8b2b5] font-bold leading-[9px] pt-[1px]"><span class="w-[73px] pl-[1px]">01:1</span><span class="w-[73px]">09:1</span><span class="w-[73px]">17:1</span><span>25:1</span></div>
        </div>
      </div>
      <!-- pitches / tracks -->
      <div id="tracks" class="flex-1 relative overflow-hidden"></div>
    </section>
  </div>
</div>

<script>
// simple seeded noise so the waveforms stay the same on every load
let seed = 7;
function rnd() { seed = (seed * 1664525 + 1013904223) % 4294967296; return seed / 4294967296; }
function lerp(pts, x) {
  for (let i = 1; i < pts.length; i++) {
    if (x <= pts[i][0]) {
      const a = pts[i - 1], b = pts[i];
      return a[1] + (b[1] - a[1]) * (x - a[0]) / (b[0] - a[0]);
    }
  }
  return pts[pts.length - 1][1];
}
function vline(x, y1, y2, col, w) {
  return `<line x1="${x}" y1="${y1}" x2="${x}" y2="${y2}" stroke="${col}" stroke-width="${w || 1}"/>`;
}
// row of small spikes from a base line
function noise(x0, x1, base, maxH, col, dir) {
  let s = "";
  for (let x = x0 + .5; x < x1; x += 2) {
    const h = Math.pow(rnd(), 3) * maxH;
    s += vline(x, base, base + dir * h, col);
  }
  return s;
}

// --- light editor waveform
(function () {
  const blue = "#5aa9e9", white = "#fbfbf1", purple = "#a03bdc", black = "#14091f";
  let s = `<rect width="416" height="240" fill="${white}"/>`;
  s += `<rect width="397" height="42" fill="${blue}"/>`;
  s += `<path d="M0 47H397V87L403 90 405 133 415 143 405 150 403 187 398 197V238H0z" fill="${blue}"/>`;
  s += `<rect x="133" width="158" height="238" fill="${purple}"/>`;
  s += vline(133.5, 0, 238, "#4a2a60") + vline(291.5, 0, 238, "#4a2a60");
  s += noise(0, 133, 42, 5, white, -1) + noise(291, 397, 42, 5, white, -1);
  s += noise(0, 133, 47, 4, white, 1) + noise(291, 397, 47, 4, white, 1);
  s += noise(133, 291, 42, 6, black, -1) + noise(133, 291, 47, 5, black, 1);
  s += noise(0, 133, 238, 5, white, -1) + noise(291, 397, 238, 3, white, -1);
  s += noise(133, 291, 238, 5, black, -1);
  s += `<path d="M0 42V32L4 28 8 32 12 24 16 30 20 22 23 32 26 42zM0 47V70L2 78 4 66 8 54 12 62 16 58 20 64 24 47zM0 238V230L8 224 16 220 20 230 26 238z" fill="${white}"/>`;
  [[24.5, 18], [59.5, 30], [65.5, 28], [90.5, 26], [97.5, 30], [117.5, 28], [305.5, 30], [311.5, 18], [387.5, 24]].forEach(p => s += vline(p[0], p[1], 42, white));
  [[65.5, 72], [304.5, 56], [311.5, 79], [312.5, 70], [387.5, 60]].forEach(p => s += vline(p[0], 47, p[1], white));
  [[65.5, 215], [66.5, 216], [76.5, 228], [90.5, 220], [311.5, 215], [312.5, 220], [387.5, 224]].forEach(p => s += vline(p[0], p[1], 238, white));
  s += vline(223.5, 5, 42, black) + vline(223.5, 47, 62, black) + vline(223.5, 205, 238, black) + vline(158.5, 30, 42, black) + vline(282.5, 30, 42, black) + vline(199.5, 232, 238, black);
  s += `<rect y="43" width="416" height="1" fill="#000"/><rect y="44" width="416" height="1" fill="#fff"/><rect y="45" width="416" height="1" fill="#000"/>`;
  s += vline(415.5, 0, 240, "#111") + `<rect y="238.5" width="416" height="1.500" fill="#111"/>`;
  document.getElementById("w1").innerHTML = s;
})();

// --- audacity waveform
(function () {
  const c = 71;
  const env = [[0, .5], [258, .5], [259, 14], [262, 10], [268, 5], [272, 5], [278, 18], [282, 25], [286, 12], [290, 18], [300, 16], [312, 18], [316, 10], [320, 2], [326, 2], [327, 12], [329, 2], [340, 2], [342, 8], [344, 2], [348, 8], [352, 4], [360, 2]];
  const inner = [[0, .5], [258, .5], [262, 3], [272, 2], [280, 6], [290, 7], [300, 6], [312, 7], [318, 2], [330, 1], [361, 1]];
  let s = `<line x1="0" y1="${c}" x2="361" y2="${c}" stroke="#3d3fb0"/>`;
  for (let x = 258.5; x < 361; x += 1) {
    const e = lerp(env, x) * (.5 + rnd() * .6);
    s += vline(x, c - e, c + e, "#3c41bb");
  }
  for (let x = 258.5; x < 361; x += 1) {
    const e = lerp(inner, x) * (.7 + rnd() * .4);
    s += vline(x, c - e, c + e, "#6b72e6");
  }
  [[53.5, 13], [61.5, 13], [34.5, 3], [37.5, 2], [217.5, 7], [228.5, 4], [245.5, 2], [282.5, 41], [326.5, 12], [339.5, 13], [343.5, 6], [350.5, 9], [347.5, 6]].forEach(p => s += vline(p[0], c - p[1], c + p[1], "#3338a8"));
  s += `<ellipse cx="191" cy="${c}" rx="3" ry="2.500" fill="#4a4fbf"/>`;
  document.getElementById("w2").innerHTML = s;
})();

// --- audition waveform
(function () {
  const g = "#44d796";
  let s = `<rect x="0" width="1" height="228" fill="#5c1f1a"/>`;
  [[19, "#8a8a8a"], [50, "#2b3a2f"], [173, "#2b3a2f"], [122, "#1f2a22"]].forEach(r => s += `<line x1="0" y1="${r[0] + .5}" x2="108" y2="${r[0] + .5}" stroke="${r[1]}"/>`);
  s += vline(62.5, 0, 228, "#2b2f2b");
  const up = [[0, 80], [6, 82], [20, 78], [35, 74], [50, 80], [58, 62], [70, 55], [80, 62], [90, 62], [108, 72]];
  const low = [[0, 172], [6, 170], [25, 166], [45, 158], [52, 170], [58, 195], [70, 188], [85, 190], [108, 188]];
  for (let x = 3.5; x < 108; x += 1) {
    let a = lerp(up, x) + rnd() * 8, b = lerp(low, x) - rnd() * 8;
    if (rnd() < .25) a -= 16 * rnd();
    if (rnd() < .25) b += 14 * rnd();
    s += vline(x, a, b, g);
  }
  [[18.5, 110, 132], [60.5, 100, 140], [72.5, 105, 130], [84.5, 95, 160]].forEach(n => s += vline(n[0], 60, n[1], "#000") + vline(n[0], n[2], 230, "#000"));
  s += vline(61.5, 45, 60, g) + vline(47.5, 205, 206, g);
  document.getElementById("w3").innerHTML = s;
})();

// --- wavepad waveform
(function () {
  let s = `<rect width="414" height="71" fill="#1185b5"/>`;
  s += `<path d="M387 0L388 15 396 18V52L387 60V142L392 185 396 202V236H414V0z" fill="#161616"/>`;
  s += `<path d="M396 30L411 35 396 38z" fill="#1185b5"/>`;
  // spikes through the middle line
  [[150.5, 58, 140], [254.5, 56, 130], [261.5, 60, 158], [269.5, 62, 150], [272.5, 60, 120], [288.5, 68, 148], [372.5, 68, 112], [43.5, 66, 100], [7.5, 68, 92], [239.5, 65, 80], [356.5, 68, 85], [176.5, 70, 90]].forEach(p => s += vline(p[0], p[1], p[2], "#0c3f5c"));
  s += noise(0, 390, 0, 3, "#0d6a92", 1);
  [[150.5, 0, 8], [254.5, 0, 8], [261.5, 0, 10], [269.5, 0, 12], [272.5, 0, 8], [288.5, 0, 8]].forEach(p => s += vline(p[0], p[1], p[2], "#0c3f5c"));
  s += noise(0, 387, 71, 6, "#0b2a3f", 1);
  for (let x = 0; x < 412; x += 10.2) {
    const w = x > 385 ? 5.100 : 4.500;
    s += `<path d="M${x} 70H${x + w * 2}L${x + w} ${x > 385 ? 79 : 77}z" fill="#e8a552"/>`;
  }
  s += `<line x1="409.5" y1="80" x2="409.5" y2="236" stroke="#ddd" stroke-dasharray="3 2"/><line x1="411.500" y1="80" x2="411.500" y2="236" stroke="#ddd" stroke-dasharray="3 2"/>`;
  document.getElementById("w4").innerHTML = s;
})();

// --- magix tracks
const icons = {
  drums: '<svg width="28" height="28" viewBox="0 0 28 28" fill="none" stroke="#c9d0d2" stroke-width="1.500"><circle cx="6" cy="7" r="5"/><circle cx="17" cy="9" r="6"/><circle cx="21" cy="20" r="5.500"/><circle cx="9" cy="18" r="4.500"/><path d="M2 27l6-5"/></svg>',
  bass: '<svg width="28" height="28" viewBox="0 0 28 28"><path d="M1 27l2-8 9-6 2-5 8-7 3 3-3 6-7 6-5 7-6 3z" fill="#c9d0d2"/><path d="M14 7l-2-2M17 4l-2-2M19 13l2 2M22 10l2 2" stroke="#c9d0d2" stroke-width="2"/></svg>',
  keys: '<svg width="26" height="20" viewBox="0 0 26 20"><rect x="0.500" y="0.500" width="25" height="19" fill="#ccd3d5"/><rect x="1" y="1" width="24" height="5" fill="#384448"/><path d="M3 6v13M8 6v13M13 6v13M18 6v13M23 6v13" stroke="#384448" stroke-width="2"/></svg>',
  fx: '<svg width="26" height="26" viewBox="0 0 26 26"><path d="M13 0l2 6 6-4-1 7 6 2-5 4 4 5-6 0 0 6-5-4-4 4-1-6-7 1 4-6-5-3 6-2-2-6 6 3z" fill="#c9d0d2"/><text x="13" y="17" font-size="9" font-weight="700" text-anchor="middle" fill="#384448" font-family="Liberation Sans">FX</text></svg>'
};
const tracks = [
  ["Drums", "drums"], ["Bass", "bass"], ["Keys", "keys"], ["Sequences", "keys"], ["Sequences", "keys"],
  ["Sequences", "keys"], ["Fx", "fx"], ["Fx", "fx"], ["", "keys"]
];
// clip data: track index, left, width, kind, label
const clips = [
  [0, 203, 36, "drums", "FreshJu..."], [0, 240, 34, "drums", ""], [0, 276, 35, "drums", "FreshJu..."], [0, 312, 36, "drums", ""], [0, 349, 36, "drums", "FreshJ..."], [0, 386, 29, "drums", ""], [0, 422, 15, "drums", ""],
  [1, 203, 36, "bass", "OffSut..."], [1, 240, 34, "bass", ""], [1, 276, 35, "bass", "OffSut..."], [1, 312, 36, "bass", ""], [1, 349, 36, "bass", "OffSut..."], [1, 386, 34, "bass", ""], [1, 422, 15, "bass", ""],
  [2, 203, 36, "keys", ""], [2, 240, 34, "keys", ""], [2, 276, 35, "keys", ""], [2, 312, 36, "keys", ""], [2, 349, 36, "keys", ""], [2, 386, 34, "keys", ""],
  [3, 349, 36, "seq", ""], [3, 386, 34, "seq", ""],
  [4, 349, 71, "arp", "CosmosArp..."],
  [5, 349, 36, "seq2", ""], [5, 386, 34, "seq2", ""],
  [6, 167, 34, "fx", ""], [6, 203, 36, "fx", "Bruise ..."], [6, 240, 34, "fx", ""], [6, 276, 35, "fx", "Bruise ..."], [6, 312, 36, "fx", ""], [6, 349, 36, "fx", "Bruise ..."], [6, 386, 34, "fx", ""], [6, 422, 15, "fx", ""],
  [7, 349, 71, "deep", "DeepS..."],
  [8, 276, 35, "plain", ""], [8, 312, 36, "plain", ""], [8, 349, 71, "plain", ""]
];
const kinds = {
  drums: { top: "#6f5b7b", bot: "#4a3a55", text: "#c4b4c4" },
  bass: { top: "#d9c3cd", bot: "#5e4653", text: "#a8969f" },
  keys: { top: "#bac8d6", bot: "#5f6f8c", text: "#fff" },
  seq: { top: "#a3b8a4", bot: "#49604e", text: "#fff" },
  seq2: { top: "#c0d8c4", bot: "#5c7a64", text: "#fff" },
  arp: { top: "#e6d8ca", bot: "#5e5a50", text: "#a59c90" },
  fx: { top: "#cdc2cb", bot: "#4b3f50", text: "#c2b4c0" },
  deep: { top: "#d8dfb8", bot: "#5d6340", text: "#c2c8a2" },
  plain: { top: "#dcdcdc", bot: "#555", text: "#fff" }
};

function clipWave(kind, w, h) {
  let s = "";
  const mid = h / 2;
  if (kind === "drums") {
    for (let x = .5; x < w; x += 2) {
      s += vline(x, 3, 3 + rnd() * 6, "#cfc2d2");
      if (rnd() < .6) s += vline(x, 21, 21 - rnd() * 8, "#d9cfe0");
    }
  } else if (kind === "bass") {
    for (let x = 2; x < w - 4; x += 8) s += `<rect x="${x}" y="7" width="5" height="9" fill="#a98a99"/>`;
    s += `<line x1="0" y1="${mid}" x2="${w}" y2="${mid}" stroke="#8f7280"/>`;
  } else if (kind === "keys") {
    for (let x = .5; x < w; x += 1) {
      const e = Math.pow(rnd(), 3) * 8 + .5;
      s += vline(x, mid - e, mid + e, "#7c8a99");
    }
  } else if (kind === "seq") {
    for (let x = .5; x < w; x += 1) {
      s += vline(x, 0, 4 + rnd() * 4, "#dfe8df") + vline(x, 16 - rnd() * 4, 19, "#dfe8df");
    }
  } else if (kind === "seq2") {
    for (let x = .5; x < w; x += 1) {
      const e = Math.pow(rnd(), 2.5) * 9 + .5;
      s += vline(x, mid - e, mid + e, "#6d8a72");
    }
  } else if (kind === "arp") {
    s += `<path d="M0 14L35 7H71" stroke="#d98050" stroke-width="1.300" fill="none"/>`;
  } else if (kind === "fx") {
    s += `<path d="M${w} 5C${w - 6} 10 ${w - 12} 13 ${w - 18} 14 ${w - 12} 15 ${w - 6} 18 ${w} 23z" fill="#8a7886"/><line x1="0" y1="14" x2="${w}" y2="14" stroke="#8a7886"/>`;
  } else if (kind === "deep") {
    s += `<path d="M6 3C10 8 16 9 34 11 16 14 12 16 8 21 6 16 6 8 6 3z" fill="#a8ad88"/><line x1="0" y1="11" x2="71" y2="11" stroke="#d98050"/>`;
  }
  return `<svg width="${w}" height="${h}" class="block">${s}</svg>`;
}

let html = `<div class="h-[15px] flex"><div class="w-[165px] bg-[#2d383b] text-[9px] text-[#9aa4a6] leading-[15px] pl-[99px] shrink-0 relative">Pitches<div class="absolute right-[7px] top-[6px] w-0 h-0 border-l-[3px] border-r-[3px] border-t-[3px] border-l-transparent border-r-transparent border-t-[#bbb]"></div></div><div class="flex-1 bg-[#3a464a] flex"><div class="w-[36px]"></div><div class="flex-1 bg-[#c5cad2] text-[9px] text-[#666] pl-[4px] leading-[15px]">d</div></div></div>`;
tracks.forEach((t, i) => {
  html += `<div class="h-[35.200px] flex border-b border-[#263035]">
    <div class="w-[165px] shrink-0 bg-[#324043] flex">
      <div class="w-[44px] shrink-0 flex items-center justify-center pr-[9px]">${icons[t[1]]}</div>
      <div class="w-[5px] flex items-end pb-[2px]"><div class="w-[3px] h-[9px] bg-[#8b979a]"></div></div>
      <div class="flex-1 flex flex-col">
        <div class="h-[14px] flex items-center text-[7px] font-bold tracking-[0.200px] text-[#a5afb1] pl-[4px] border-b border-[#263035]"><span class="w-[26px]">SOLO</span><span class="w-[35px]">MUTE</span><span class="w-[33px]">REC</span><span class="whitespace-nowrap">FX ▾</span></div>
        <div class="h-[20px] bg-[#0f1a1d] flex items-center justify-between px-[3px] pb-[2px] text-[10px] text-[#c4cdcf]"><span>${t[0]}</span><span class="text-[17px] text-[#929ea1] mr-[3px]">${i < 8 ? i + 1 : ""}</span></div>
      </div>
    </div>
    <div class="flex-1 bg-[#3a464a]"></div>
  </div>`;
});
const box = document.getElementById("tracks");
box.innerHTML = html;
// vertical grid + clips + playhead are placed by time on the timeline
let over = "";
[239, 312, 384].forEach(x => over += `<div class="absolute top-[15px] bottom-0 w-[1px] bg-[#1f282b]" style="left:${x}px"></div>`);
clips.forEach(c => {
  const k = kinds[c[3]];
  const top = 15 + c[0] * 35.2;
  over += `<div class="absolute flex flex-col overflow-hidden" style="left:${c[1]}px;width:${c[2]}px;top:${top}px;height:34px;background:${k.top}">
    <div class="h-[23px] shrink-0">${clipWave(c[3], c[2], 23)}</div>
    <div class="flex-1" style="background:${k.bot}"></div>
  </div>`;
});
// the labels run across the clip joins, so they go in a second pass with the corner handles
clips.filter(c => c[4] !== "").forEach(c => {
  const top = 15 + c[0] * 35.2 + 23;
  const span = c[3] === "arp" || c[3] === "deep" ? c[2] : 71;
  over += `<div class="absolute h-[11px] text-[9px] font-bold leading-[11px] pl-[11px] whitespace-nowrap overflow-hidden" style="left:${c[1]}px;width:${span}px;top:${top}px;color:${kinds[c[3]].text}">${c[4]}
    <div class="absolute left-[1px] bottom-[1px] w-0 h-0 border-t-[7px] border-r-[7px] border-t-transparent border-r-[#14181a]"></div>
    <div class="absolute right-[1px] bottom-[1px] w-0 h-0 border-t-[7px] border-l-[7px] border-t-transparent border-l-[#14181a]"></div>
  </div>`;
});
over += `<div class="absolute top-0 bottom-0 left-[165px] w-[2px] bg-[#8f2f2c]"></div>`;
over += `<div class="absolute -top-[15px] bottom-0 left-[388px] w-[2px] bg-[#d9605a]/70"></div>`;
box.insertAdjacentHTML("beforeend", over);
</script>
</body>
</html>
